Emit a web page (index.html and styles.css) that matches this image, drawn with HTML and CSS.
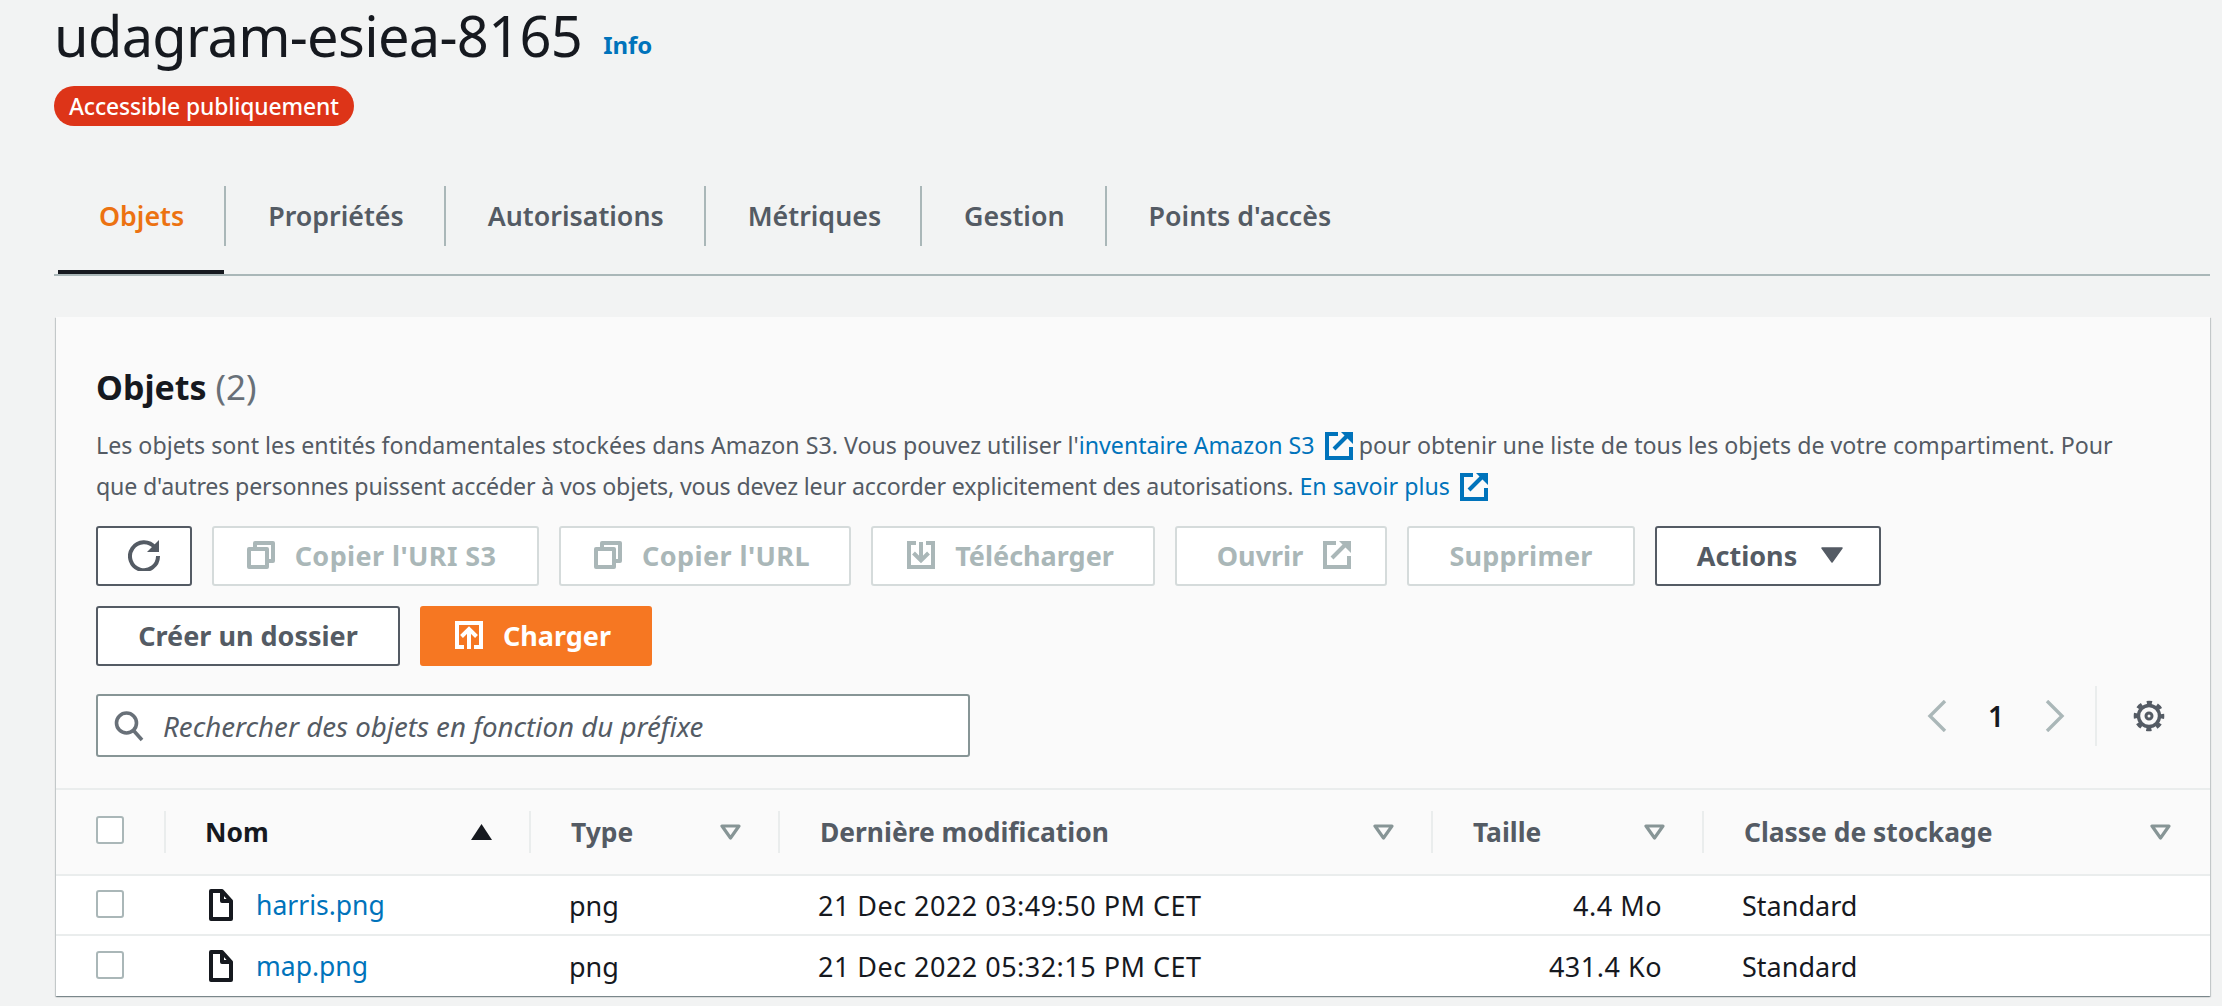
FILE: index.html
```html
<!DOCTYPE html>
<html lang="fr">
<head>
<meta charset="utf-8">
<title>udagram-esiea-8165</title>
<link rel="stylesheet" href="styles.css">
</head>
<body>
<svg class="defs" width="0" height="0" aria-hidden="true">
  <symbol id="i-copy" viewBox="0 0 28 28"><path d="M8 8V2h18v18h-6M2 8h18v18H2z" fill="none" stroke="currentColor" stroke-width="4" stroke-linejoin="round"/></symbol>
  <symbol id="i-down" viewBox="0 0 28 28"><path d="M9 2H2v24h24V2h-7M14 1v18M6.500 12l7.500 7.500 7.500-7.500" fill="none" stroke="currentColor" stroke-width="4"/></symbol>
  <symbol id="i-ext" viewBox="0 0 28 28"><path d="M13 2H2v24h24V15" fill="none" stroke="currentColor" stroke-width="4"/><path d="M9 17L22 4" fill="none" stroke="currentColor" stroke-width="4"/><path d="M16 0h12v12z" fill="currentColor"/></symbol>
  <symbol id="i-up" viewBox="0 0 28 28"><path d="M9 26H2V2h24v24h-7M14 28V8M6.500 15.500L14 8l7.500 7.500" fill="none" stroke="currentColor" stroke-width="4"/></symbol>
  <symbol id="i-file" viewBox="0 0 24 32"><path d="M2 2h11l9 10v18H2zM13 2v10h9" fill="none" stroke="currentColor" stroke-width="4" stroke-linejoin="round"/></symbol>
  <symbol id="i-sort" viewBox="0 0 21 16"><path d="M2 2h17l-8.500 12z" fill="none" stroke="currentColor" stroke-width="3.200" stroke-linejoin="round"/></symbol>
</svg>

<main class="page">
  <header class="head">
    <div class="title-row">
      <h1 class="title">udagram-esiea-8165</h1>
      <a class="info">Info</a>
    </div>
    <span class="badge">Accessible publiquement</span>
  </header>

  <nav class="tabs">
    <a class="tab tab-active">Objets</a>
    <a class="tab">Propriétés</a>
    <a class="tab">Autorisations</a>
    <a class="tab tab-tight">Métriques</a>
    <a class="tab">Gestion</a>
    <a class="tab tab-last">Points d'accès</a>
  </nav>

  <section class="card">
    <div class="card-top">
      <h2 class="card-title">Objets <span class="count">(2)</span></h2>
      <p class="desc">Les objets sont les entités fondamentales stockées dans Amazon S3. Vous pouvez utiliser l'<a class="link">inventaire Amazon S3 <svg class="ext-link"><use href="#i-ext"/></svg></a> pour obtenir une liste de tous les objets de votre compartiment. Pour <span class="desc-tail">que d'autres personnes puissent accéder à vos objets, vous devez leur accorder explicitement des autorisations.</span> <a class="link">En savoir plus <svg class="ext-link"><use href="#i-ext"/></svg></a></p>

      <div class="actions">
        <button class="btn btn-icon" aria-label="Actualiser">
          <svg class="refresh" viewBox="0 0 32 32"><path d="M27 8.500A14 14 0 1 0 30 17" fill="none" stroke="currentColor" stroke-width="4"/><path d="M31 1v12H19z" fill="currentColor"/></svg>
        </button>
        <button class="btn btn-off b-uri"><svg class="ic"><use href="#i-copy"/></svg>Copier l'URI S3</button>
        <button class="btn btn-off b-url"><svg class="ic"><use href="#i-copy"/></svg>Copier l'URL</button>
        <button class="btn btn-off b-dl"><svg class="ic"><use href="#i-down"/></svg>Télécharger</button>
        <button class="btn btn-off b-open">Ouvrir<svg class="ic"><use href="#i-ext"/></svg></button>
        <button class="btn btn-off b-del">Supprimer</button>
        <button class="btn b-act">Actions<svg class="caret" viewBox="0 0 22 16"><path d="M1 1h20L11 15z" fill="currentColor" stroke="currentColor" stroke-width="1.500" stroke-linejoin="round"/></svg></button>
        <button class="btn b-new">Créer un dossier</button>
        <button class="btn btn-primary b-load"><svg class="ic"><use href="#i-up"/></svg>Charger</button>
      </div>

      <div class="filter-row">
        <label class="search">
          <svg class="search-ic" viewBox="0 0 30 32"><circle cx="12.500" cy="13" r="10" fill="none" stroke="currentColor" stroke-width="3.600"/><path d="M20 21l8 9" fill="none" stroke="currentColor" stroke-width="3.600"/></svg>
          <span class="placeholder">Rechercher des objets en fonction du préfixe</span>
        </label>
        <div class="pager">
          <svg class="chev" viewBox="0 0 20 32"><path d="M18 1L3 16l15 15" fill="none" stroke="currentColor" stroke-width="3.400"/></svg>
          <span class="page-num">1</span>
          <svg class="chev" viewBox="0 0 20 32"><path d="M2 1l15 15L2 31" fill="none" stroke="currentColor" stroke-width="3.400"/></svg>
          <span class="gear-wrap">
            <svg class="gear" viewBox="0 0 32 32"><circle cx="16" cy="16" r="10.500" fill="none" stroke="currentColor" stroke-width="3.400"/><circle cx="16" cy="16" r="13.500" fill="none" stroke="currentColor" stroke-width="3.600" stroke-dasharray="5.300 5.300" stroke-dashoffset="2.650"/><circle cx="16" cy="16" r="3" fill="none" stroke="currentColor" stroke-width="3"/></svg>
          </span>
        </div>
      </div>
    </div>

    <div class="table">
      <div class="row row-head">
        <div class="cell c-check"><span class="check"></span></div>
        <div class="cell h-cell h-active">Nom<svg class="sort sort-on" viewBox="0 0 21 16"><path d="M10.500 0L21 16H0z" fill="currentColor"/></svg></div>
        <div class="cell h-cell">Type<svg class="sort"><use href="#i-sort"/></svg></div>
        <div class="cell h-cell">Dernière modification<svg class="sort"><use href="#i-sort"/></svg></div>
        <div class="cell h-cell">Taille<svg class="sort"><use href="#i-sort"/></svg></div>
        <div class="cell h-cell h-last">Classe de stockage<svg class="sort"><use href="#i-sort"/></svg></div>
      </div>
      <div class="row row-body">
        <div class="cell c-check"><span class="check"></span></div>
        <div class="cell d-cell d-name"><svg class="file"><use href="#i-file"/></svg><a class="link">harris.png</a></div>
        <div class="cell d-cell">png</div>
        <div class="cell d-cell d-date">21 Dec 2022 03:49:50 PM CET</div>
        <div class="cell d-cell d-size">4.4 Mo</div>
        <div class="cell d-cell">Standard</div>
      </div>
      <div class="row row-body">
        <div class="cell c-check"><span class="check"></span></div>
        <div class="cell d-cell d-name"><svg class="file"><use href="#i-file"/></svg><a class="link">map.png</a></div>
        <div class="cell d-cell">png</div>
        <div class="cell d-cell d-date">21 Dec 2022 05:32:15 PM CET</div>
        <div class="cell d-cell d-size">431.4 Ko</div>
        <div class="cell d-cell">Standard</div>
      </div>
    </div>
  </section>
</main>
</body>
</html>
```

FILE: styles.css
```css
* { box-sizing: border-box; }
html, body { margin: 0; padding: 0; height: 1006px; overflow: hidden; }
body {
  background: #f2f3f3;
  color: #16191f;
  font-family: "Noto Sans", "Open Sans", sans-serif;
}
.defs { position: absolute; }
.page { padding: 0 12px 0 54px; }

.head { height: 186px; }
.title-row { display: flex; align-items: flex-start; height: 76px; gap: 21px; }
.title { margin: 0; font-size: 56px; line-height: 70px; font-weight: 400; letter-spacing: -0.7px; white-space: nowrap; }
.info { margin-top: 28px; font-size: 24px; font-weight: 700; color: #0073bb; }
.badge {
  display: inline-flex; align-items: center; margin-top: 10px; height: 40px; padding: 0 15px;
  background: #dd3418; color: #fff; border-radius: 20px; font-size: 22.800px; font-weight: 500; letter-spacing: -0.1px; white-space: nowrap;
}

.tabs { display: flex; height: 90px; border-bottom: 2px solid #aab7b8; padding-left: 4px; }
.tab {
  height: 60px; display: flex; align-items: center; padding: 0 40px 2px 42px;
  border-right: 2px solid #aab7b8; color: #545b64; font-size: 26.800px; font-weight: 600;
  white-space: nowrap;
}
.tab-tight { padding-right: 39px; }
.tab-last { border-right: 0; }
.tab-active { color: #ec7211; position: relative; padding-left: 41px; }
.tab-active::after {
  content: ""; position: absolute; left: 0; right: 0; top: 84px; height: 4px; background: #16191f;
}

.card {
  margin-top: 41px; margin-left: 2px; background: #fafafa;
  box-shadow: 0 1px 1px 0 rgba(0,28,36,.3), 1px 1px 1px 0 rgba(0,28,36,.15), -1px 1px 1px 0 rgba(0,28,36,.15);
}
.card-top { padding: 48px 40px 0 40px; height: 471px; }
.card-title { margin: 0; font-size: 34px; line-height: 44px; font-weight: 700; }
.count { font-weight: 400; font-size: 35px; color: #687078; }
.desc { margin: 16px 0 0; padding-right: 40px; font-size: 23.200px; line-height: 41px; color: #545b64; }
.desc-tail { letter-spacing: -0.17px; }
.link { color: #0073bb; }
.ext-link { width: 28px; height: 28px; color: #0073bb; vertical-align: -6px; margin-left: 4px; }

.actions { display: flex; flex-wrap: wrap; gap: 20px 20px; margin-top: 19px; }
.btn {
  display: inline-flex; align-items: center; justify-content: center; gap: 20px;
  height: 60px; border-radius: 3px; border: 2px solid #545b64; background: #fff;
  color: #545b64; font: 700 27px "Noto Sans", sans-serif; white-space: nowrap; padding: 0 0 2px;
}
.btn-off { border-color: #d5dbdb; color: #aab7b8; }
.btn-primary { background: #f67722; border-color: #f67722; color: #fff; }
.btn-icon { width: 96px; }
.refresh { width: 32px; height: 32px; }
.ic { width: 28px; height: 28px; flex: none; }
.b-uri { width: 327px; letter-spacing: .4px; padding-right: 8px; }
.b-url { width: 292px; letter-spacing: .4px; padding-right: 6px; }
.b-dl { width: 284px; padding-right: 5px; }
.b-open { width: 212px; padding-left: 6px; }
.b-del { width: 228px; letter-spacing: .2px; }
.b-act { width: 226px; gap: 24px; padding-left: 4px; }
.b-new { width: 304px; }
.b-load { width: 232px; padding-right: 6px; }
.caret { width: 22px; height: 16px; }

.filter-row { display: flex; justify-content: space-between; align-items: flex-start; margin-top: 20px; }
.search {
  display: flex; align-items: center; gap: 19px; width: 874px; height: 63px; padding-left: 16px; margin-top: 8px;
  background: #fff; border: 2px solid #879596; border-radius: 3px;
}
.search-ic { width: 30px; height: 32px; color: #687078; }
.placeholder { font-size: 27.700px; font-style: italic; color: #545b64; white-space: nowrap; }
.pager { display: flex; align-items: center; height: 60px; margin-right: 5px; }
.chev { width: 20px; height: 32px; color: #aab7b8; }
.page-num { width: 98px; text-align: center; font-size: 28px; font-weight: 600; color: #16191f; }
.gear-wrap { display: flex; align-items: center; height: 60px; margin-left: 30px; padding-left: 36px; border-left: 2px solid #eaeded; }
.gear { width: 32px; height: 32px; color: #545b64; }

.table { border-top: 2px solid #eaeded; }
.row {
  display: grid; grid-template-columns: 108px 365px 249px 653px 271px 1fr; align-items: center;
}
.row-head { height: 86px; border-bottom: 2px solid #eaeded; }
.row-body { height: 60px; background: #fff; border-bottom: 2px solid #eaeded; }
.row-body:last-child { border-bottom: 0; }
.cell { display: flex; align-items: center; min-width: 0; }
.c-check { padding-left: 40px; }
.check { width: 28px; height: 28px; border: 2px solid #aab7b8; border-radius: 3px; background: #fff; margin-bottom: 3px; }
.row-head .check { margin-bottom: 5px; }
.h-cell {
  height: 42px; border-left: 2px solid #eaeded; padding: 0 37px 0 40px; justify-content: space-between;
  font-size: 26.400px; font-weight: 700; color: #545b64;
}
.h-active { color: #16191f; padding-left: 39px; }
.h-last { padding-right: 39px; }
.sort { width: 21px; height: 16px; color: #879596; flex: none; }
.sort-on { color: #16191f; }
.d-cell { padding-left: 40px; font-size: 27px; color: #16191f; white-space: nowrap; }
.d-name { padding-left: 45px; gap: 23px; }
.d-name .link { font-size: 26.500px; }
.d-date { letter-spacing: .47px; }
.d-size { justify-content: flex-end; padding: 0 40px 0 0; letter-spacing: .5px; }
.file { width: 24px; height: 32px; color: #16191f; flex: none; }
```
